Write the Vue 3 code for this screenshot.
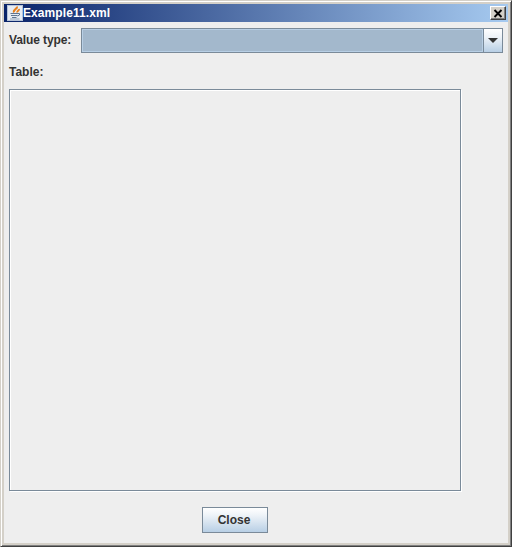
<template>
  <div class="window">
    <div class="titlebar">
      <svg class="java-icon" viewBox="0 0 16 16" width="16" height="16">
        <rect x="0.5" y="0.5" width="15" height="15" fill="#e6ebf2" stroke="#b5c3d8" />
        <path d="M10 1.500c1 2.500-4.500 3-3 6M12 4c.5 1.500-2.500 2-1.500 3.500" fill="none" stroke="#e8801e" stroke-width="2" />
        <path d="M3.500 8.500h7.500M4 10.500h6.500M5 12.500h4.500" fill="none" stroke="#5f7492" />
        <path d="M11 8.500h1.500v1.500l-2 1" fill="none" stroke="#5f7492" />
        <path d="M3 14h9.500" fill="none" stroke="#94a4ba" />
      </svg>
      <span class="title">Example11.xml</span>
      <button class="close-x" type="button">
        <svg viewBox="0 0 10 9" width="10" height="9">
          <path d="M1.500 1l7 7M8.500 1l-7 7" stroke="#000" stroke-width="1.900" fill="none" />
        </svg>
      </button>
    </div>
    <div class="content">
      <div class="value-row">
        <label class="field-label">Value type:</label>
        <div class="combo">
          <div class="combo-value"></div>
          <div class="combo-arrow"><span class="triangle"></span></div>
        </div>
      </div>
      <label class="field-label table-label">Table:</label>
      <div class="table-panel"></div>
      <div class="footer">
        <button class="close-btn" type="button">Close</button>
      </div>
    </div>
  </div>
</template>

<script setup>
</script>

<style>
html, body {
  margin: 0;
  background: #eeeeee;
}
</style>

<style scoped>
.window {
  box-sizing: border-box;
  width: 512px;
  height: 547px;
  display: flex;
  flex-direction: column;
  background: #eeeeee;
  padding: 3px;
  border-top: 1px solid #d4d0c8;
  border-left: 1px solid #d4d0c8;
  border-right: 1px solid #404040;
  border-bottom: 1px solid #404040;
  box-shadow:
    inset 1px 1px 0 #ffffff,
    inset -1px -1px 0 #808080,
    inset 3px 3px 0 #d4d0c8,
    inset -3px -3px 0 #d4d0c8;
  font-family: "Liberation Sans", Arial, sans-serif;
}

.titlebar {
  height: 18px;
  display: flex;
  align-items: center;
  background: linear-gradient(to right, #0a246a, #a6caf0);
  padding: 0 2px 0 3px;
  flex: none;
}

.java-icon {
  flex: none;
}

.title {
  color: #ffffff;
  font-size: 12px;
  font-weight: 700;
  letter-spacing: 0.08px;
  flex: 1;
}

.close-x {
  box-sizing: border-box;
  width: 16px;
  height: 14px;
  padding: 0;
  display: flex;
  align-items: center;
  justify-content: center;
  background: #d4d0c8;
  border: 1px solid;
  border-color: #ffffff #404040 #404040 #ffffff;
  box-shadow: inset -1px -1px 0 #808080;
}

.content {
  flex: 1;
  display: flex;
  flex-direction: column;
  padding: 6px 5px 0;
}

.value-row {
  display: flex;
  align-items: center;
  height: 24px;
}

.field-label {
  font-size: 12px;
  font-weight: 700;
  color: #333333;
}

.value-row .field-label {
  width: 72px;
  letter-spacing: -0.1px;
}

.combo {
  flex: 1;
  box-sizing: border-box;
  height: 25px;
  display: flex;
  border: 1px solid #7a8a99;
  background: #ffffff;
}

.combo-value {
  flex: 1;
  background: #a3b8cc;
  border: 1px solid #b8cfe5;
}

.combo-arrow {
  width: 18px;
  display: flex;
  align-items: center;
  justify-content: center;
  border-left: 1px solid #7a8a99;
  background: linear-gradient(to bottom, #ffffff, #eef3f8 35%, #b8cfe5);
}

.triangle {
  width: 0;
  height: 0;
  border-left: 5px solid transparent;
  border-right: 5px solid transparent;
  border-top: 5px solid #333333;
}

.table-label {
  margin-top: 13px;
  line-height: 14px;
}

.table-panel {
  box-sizing: border-box;
  width: 452px;
  height: 402px;
  margin-top: 10px;
  border: 1px solid #7a8a99;
  box-shadow: 1px 1px 0 #ffffff, inset 1px 1px 0 #ffffff;
  background: #eeeeee;
}

.footer {
  width: 452px;
  display: flex;
  justify-content: center;
  margin-top: 16px;
}

.close-btn {
  box-sizing: border-box;
  width: 66px;
  height: 26px;
  padding: 0 2px 0 0;
  border: 1px solid #7a8a99;
  background: linear-gradient(to bottom, #ffffff, #eef3f8 30%, #b8cfe5);
  color: #333333;
  font-family: "Liberation Sans", Arial, sans-serif;
  font-size: 12px;
  font-weight: 700;
}
</style>
